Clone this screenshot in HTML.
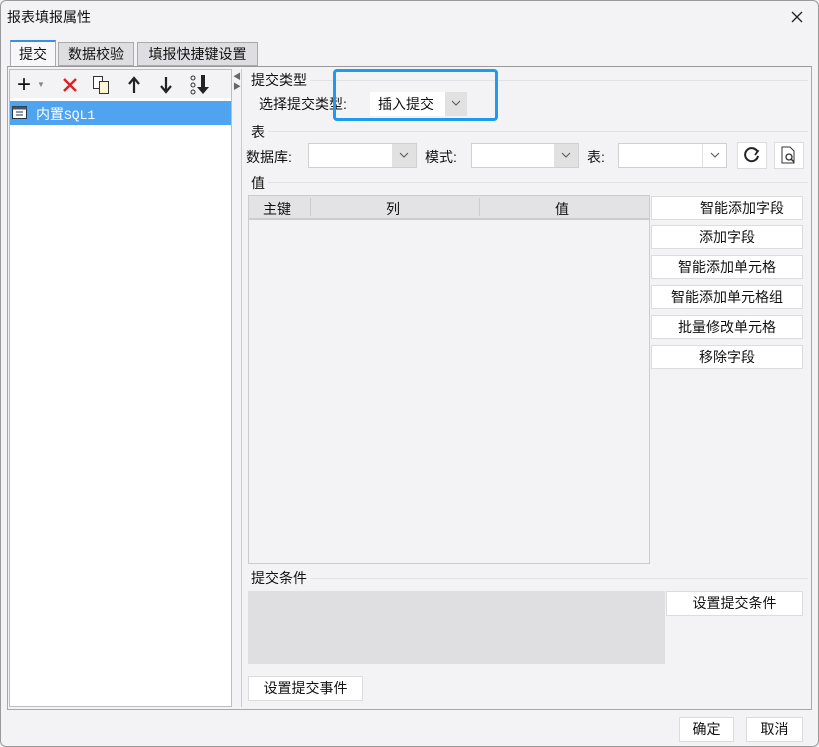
<!DOCTYPE html>
<html><head><meta charset="utf-8"><style>
*{box-sizing:border-box;margin:0;padding:0}
body{width:819px;height:747px;background:#f3f3f5;font-family:"Liberation Sans","Noto Sans CJK SC",sans-serif;font-size:14px;color:#111;position:relative;overflow:hidden}
.a{position:absolute}
.btn{position:absolute;background:#fff;border:1px solid #dcdcdc;text-align:center;line-height:22px;font-size:14px}
.combo{position:absolute;background:#fff;border:1px solid #d0d0d0;height:25px}
.combo .dd{position:absolute;right:0;top:0;bottom:0;width:24px;background:#e1e1e1}
.combo .dd svg{position:absolute;left:7px;top:8px}
.hl{position:absolute;height:1px;background:#e2e2e6}
</style></head><body>
<div class="a" style="left:0;top:0;width:819px;height:747px;border:1px solid #9a9a9a;border-radius:6px"></div>
<div class="a" style="left:7px;top:7px;font-size:14px">报表填报属性</div>
<svg class="a" style="left:791px;top:11px" width="12" height="12"><path d="M1 1L11 11M11 1L1 11" stroke="#222" stroke-width="1.3"/></svg>
<div class="a" style="left:10px;top:40px;width:46px;height:27px;background:#f7f7f9;border:1px solid #aaa;border-bottom:none;border-top:2px solid #3a8ee6;text-align:center;line-height:24px">提交</div>
<div class="a" style="left:58px;top:42px;width:76px;height:24px;background:#dedee2;border:1px solid #aaa;text-align:center;line-height:23px">数据校验</div>
<div class="a" style="left:137px;top:42px;width:121px;height:24px;background:#dedee2;border:1px solid #aaa;text-align:center;line-height:23px">填报快捷键设置</div>
<div class="a" style="left:7px;top:66px;width:805px;height:644px;border:1px solid #a8a8a8;border-top-color:#999"></div>
<div class="a" style="left:9px;top:69px;width:223px;height:638px;border:1px solid #bdbdbd;background:#f3f3f5"></div>
<div class="a" style="left:10px;top:98px;width:221px;height:608px;background:#fff"></div>
<div class="a" style="left:17px;top:71px;font-size:24px;line-height:28px">+</div>
<div class="a" style="left:37px;top:80px;font-size:8px;color:#888">▼</div>
<svg class="a" style="left:62px;top:77px" width="16" height="16"><path d="M2 2L14 14M14 2L2 14" stroke="#e02020" stroke-width="2.4"/></svg>
<svg class="a" style="left:92px;top:75px" width="20" height="20"><rect x="1.5" y="1.5" width="9" height="12" fill="#fff" stroke="#333"/><rect x="7.5" y="6.5" width="9" height="12" fill="#fff6d8" stroke="#333"/></svg>
<svg class="a" style="left:127px;top:76px" width="14" height="18"><path d="M7 17V3M2 8L7 2L12 8" stroke="#222" stroke-width="2.2" fill="none"/></svg>
<svg class="a" style="left:159px;top:76px" width="14" height="18"><path d="M7 1V15M2 10L7 16L12 10" stroke="#222" stroke-width="2.2" fill="none"/></svg>
<svg class="a" style="left:189px;top:74px" width="22" height="22"><circle cx="4" cy="4" r="2" fill="none" stroke="#333"/><circle cx="4" cy="11" r="2" fill="none" stroke="#333"/><circle cx="4" cy="18" r="2" fill="none" stroke="#333"/><path d="M12 1V13H8L14 20L20 13H16V1Z" fill="#222"/></svg>
<div class="a" style="left:10px;top:101px;width:221px;height:24px;background:#4fa3ef"></div>
<svg class="a" style="left:12px;top:106px" width="16" height="14"><rect x="0.5" y="0.5" width="14" height="12" fill="#fff" stroke="#234"/><rect x="0.5" y="0.5" width="14" height="3" fill="#456"/><path d="M4 6H11M4 9H11" stroke="#234"/></svg>
<div class="a" style="left:36px;top:104px;color:#fff;font-size:14px">内置<span style="font-family:'Liberation Mono',monospace;font-size:13px">SQL1</span></div>
<div class="a" style="left:233px;top:72px;font-size:8px;color:#666;line-height:10px">◀<br>▶</div>
<div class="a" style="left:241px;top:69px;width:570px;height:638px;border-left:1px solid #ccc"></div>
<div class="a" style="left:251px;top:70px">提交类型</div><div class="hl" style="left:310px;top:80px;width:498px"></div>
<div class="a" style="left:259px;top:94px">选择提交类型:</div>
<div class="combo" style="left:370px;top:92px;width:97px;height:24px;border:none"><div style="position:absolute;left:8px;top:2px">插入提交</div><div class="dd" style="width:22px"><svg width="10" height="6" style="left:6px"><path d="M1 1L5 5L9 1" stroke="#555" fill="none"/></svg></div></div>
<div class="a" style="left:333px;top:69px;width:165px;height:52px;border:3px solid #1d9bf0;border-radius:4px"></div>
<div class="a" style="left:251px;top:122px">表</div><div class="hl" style="left:268px;top:131px;width:540px"></div>
<div class="a" style="left:246px;top:147px">数据库:</div>
<div class="combo" style="left:308px;top:143px;width:109px"><div class="dd"><svg width="10" height="6"><path d="M1 1L5 5L9 1" stroke="#555" fill="none"/></svg></div></div>
<div class="a" style="left:425px;top:147px">模式:</div>
<div class="combo" style="left:471px;top:143px;width:108px"><div class="dd"><svg width="10" height="6"><path d="M1 1L5 5L9 1" stroke="#555" fill="none"/></svg></div></div>
<div class="a" style="left:587px;top:147px">表:</div>
<div class="combo" style="left:618px;top:143px;width:109px"><div class="dd" style="background:#fff;border-left:1px solid #e0e0e0"><svg width="10" height="6"><path d="M1 1L5 5L9 1" stroke="#555" fill="none"/></svg></div></div>
<div class="btn" style="left:737px;top:142px;width:30px;height:27px"></div>
<svg class="a" style="left:743px;top:146px" width="18" height="18"><path d="M14 5A6.5 6.5 0 1 0 15 10" stroke="#222" stroke-width="2" fill="none"/><path d="M10 2L15 5L12 9" stroke="#222" stroke-width="1.8" fill="none"/></svg>
<div class="btn" style="left:774px;top:142px;width:30px;height:27px"></div>
<svg class="a" style="left:781px;top:146px" width="16" height="18"><path d="M1 1H9L13 5V17H1Z" fill="none" stroke="#333"/><circle cx="8" cy="11" r="3" fill="none" stroke="#333" stroke-width="1.3"/><path d="M10 13L13 16" stroke="#333" stroke-width="1.5"/></svg>
<div class="a" style="left:251px;top:173px">值</div><div class="hl" style="left:268px;top:182px;width:540px"></div>
<div class="a" style="left:248px;top:195px;width:402px;height:369px;background:#f3f3f5;border:1px solid #ccc"></div>
<div class="a" style="left:249px;top:196px;width:400px;height:24px;background:#e3e3e6;border-bottom:2px solid #ccc"></div>
<div class="a" style="left:263px;top:199px">主键</div>
<div class="a" style="left:310px;top:198px;width:1px;height:18px;background:#ccc"></div>
<div class="a" style="left:386px;top:199px">列</div>
<div class="a" style="left:479px;top:198px;width:1px;height:18px;background:#ccc"></div>
<div class="a" style="left:555px;top:199px">值</div>
<div class="btn" style="left:651px;top:196px;width:152px;height:24px;padding-left:30px">智能添加字段</div>
<div class="btn" style="left:651px;top:225px;width:152px;height:24px">添加字段</div>
<div class="btn" style="left:651px;top:255px;width:152px;height:24px">智能添加单元格</div>
<div class="btn" style="left:651px;top:285px;width:152px;height:24px">智能添加单元格组</div>
<div class="btn" style="left:651px;top:315px;width:152px;height:24px">批量修改单元格</div>
<div class="btn" style="left:651px;top:345px;width:152px;height:24px">移除字段</div>
<div class="a" style="left:251px;top:568px">提交条件</div><div class="hl" style="left:310px;top:578px;width:498px"></div>
<div class="a" style="left:248px;top:591px;width:417px;height:73px;background:#dfdfe1"></div>
<div class="btn" style="left:666px;top:591px;width:137px;height:25px">设置提交条件</div>
<div class="btn" style="left:248px;top:676px;width:115px;height:25px">设置提交事件</div>
<div class="btn" style="left:679px;top:717px;width:55px;height:25px">确定</div>
<div class="btn" style="left:746px;top:717px;width:57px;height:25px">取消</div>
</body></html>
